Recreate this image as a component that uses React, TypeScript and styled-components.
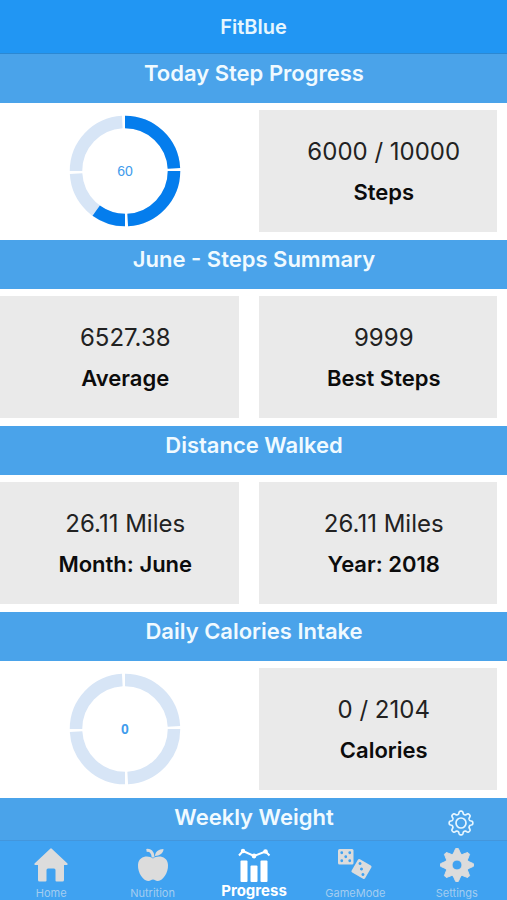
import React from "react";
import styled, { createGlobalStyle } from "styled-components";

const GlobalStyle = createGlobalStyle`
  * { box-sizing: border-box; }
  body {
    margin: 0;
    background: #ffffff;
    font-family: Inter, "Liberation Sans", sans-serif;
  }
`;

const Screen = styled.div`
  display: flex;
  flex-direction: column;
  height: 100vh;
`;

const TitleBar = styled.header`
  display: flex;
  align-items: center;
  justify-content: center;
  height: 54px;
  flex: none;
  background: #2196f3;
  border-bottom: 1px solid #2b88d3;
`;

const AppTitle = styled.h1`
  margin: 0;
  color: #e6f6fe;
  font-size: 20px;
  font-weight: 600;
  line-height: 28px;
`;

const Content = styled.main`
  flex: 1;
  min-height: 0;
  overflow-y: auto;
  scrollbar-width: none;
`;

const SectionBar = styled.div`
  display: grid;
  grid-template-columns: 60px 1fr 60px;
  align-items: start;
  height: 49px;
  padding-top: 5px;
  padding-left: 1px;
  background: #4aa3ea;
`;

const SectionTitle = styled.h2`
  grid-column: 2;
  margin: 0;
  color: #f0faff;
  font-size: 22px;
  font-weight: 600;
  line-height: 28px;
  text-align: center;
`;

const GearButton = styled.button`
  display: flex;
  justify-self: start;
  padding: 0;
  margin: 7px 0 0 1px;
  border: 0;
  background: none;
  color: #e6f6ff;
  cursor: pointer;
`;

const CardRow = styled.div`
  display: grid;
  grid-template-columns: 1fr 1fr;
  column-gap: 20px;
  padding: 7px 10px 8px 0;
`;

const Card = styled.div<{ $plain?: boolean }>`
  display: flex;
  flex-direction: column;
  align-items: center;
  justify-content: center;
  height: 122px;
  padding-top: ${(p) => (p.$plain ? "0" : "2px")};
  padding-left: 12px;
  background: ${(p) => (p.$plain ? "transparent" : "#eaeaea")};
`;

const Value = styled.div`
  color: #222222;
  font-size: 24px;
  line-height: 40px;
`;

const Caption = styled.div`
  color: #0c0c0c;
  font-size: 22px;
  font-weight: 600;
  line-height: 40px;
`;

const RingText = styled.text<{ $bold: boolean }>`
  fill: #3f9cec;
  font-family: "Liberation Sans", sans-serif;
  font-size: 14px;
  font-weight: ${(p) => (p.$bold ? 700 : 400)};
  text-anchor: middle;
`;

const TabBar = styled.nav`
  display: grid;
  grid-template-columns: repeat(5, 1fr);
  flex: none;
  height: 60px;
  background: #3fa2f1;
  border-top: 1px solid #4396dc;
`;

const Tab = styled.a<{ $active?: boolean }>`
  display: flex;
  flex-direction: column;
  align-items: center;
  padding-top: 6px;
  padding-left: 1px;
  gap: 1px;
  color: ${(p) => (p.$active ? "#ffffff" : "#dcdcdc")};
  text-decoration: none;
`;

const TabLabel = styled.span<{ $active?: boolean }>`
  color: ${(p) => (p.$active ? "#ffffff" : "#a3cdf0")};
  font-size: ${(p) => (p.$active ? "15px" : "11px")};
  font-weight: ${(p) => (p.$active ? 700 : 400)};
  line-height: ${(p) => (p.$active ? "14px" : "18px")};
`;

function Ring({ percent, text, label }: { percent: number; text: string; label: string }) {
  const start = [0, 25, 50, 75];
  const length = 24.1;
  const arc = (from: number, size: number, color: string) => (
    <circle
      key={`${color}${from}`}
      cx="56"
      cy="56"
      r="49"
      fill="none"
      stroke={color}
      strokeWidth="12.5"
      pathLength="100"
      strokeDasharray={`${size} ${100 - size}`}
      strokeDashoffset={-from}
      transform="rotate(-90 56 56)"
    />
  );
  return (
    <svg width="112" height="112" viewBox="0 0 112 112" role="img" aria-label={label}>
      {start.map((s) => arc(s, length, "#d7e5f6"))}
      {start
        .filter((s) => percent > s)
        .map((s) => arc(s, Math.min(length, percent - s), "#047ded"))}
      <RingText x="56" y="61" $bold={percent === 0}>{text}</RingText>
    </svg>
  );
}

const point = (c: number, r: number, a: number) =>
  `${(c + r * Math.cos(a)).toFixed(2)} ${(c + r * Math.sin(a)).toFixed(2)}`;

/* Eight straight-sided teeth. */
function gearPath(c: number, outer: number, inner: number, tip: number, root: number) {
  const pts: string[] = [];
  for (let i = 0; i < 8; i++) {
    const mid = (i * Math.PI) / 4 - Math.PI / 2;
    pts.push(
      point(c, inner, mid - root),
      point(c, outer, mid - tip),
      point(c, outer, mid + tip),
      point(c, inner, mid + root),
    );
  }
  return `M${pts.join("L")}Z`;
}

/* Eight rounded teeth, sampled along a flattened cosine. */
function softGearPath(c: number, radius: number, depth: number) {
  const pts: string[] = [];
  for (let i = 0; i < 160; i++) {
    const a = (i * Math.PI) / 80;
    pts.push(point(c, radius + depth * Math.tanh(1.8 * Math.cos(8 * a)), a));
  }
  return `M${pts.join("L")}Z`;
}

const OutlineGear = () => (
  <svg width="26" height="26" viewBox="0 0 26 26" fill="none" stroke="currentColor" strokeWidth="1.7" strokeLinejoin="round">
    <path d={softGearPath(13, 10.4, 1.5)} />
    <circle cx="13" cy="13" r="5" />
  </svg>
);

const HomeIcon = () => (
  <svg width="36" height="36" viewBox="0 0 36 36" fill="currentColor">
    <path d="M17.500 1.500Q18 1.200 18.500 1.500L34.500 16.500Q35 17.800 34 18H31V33Q31 34.500 29.500 34.500H23.500Q22.500 34.500 22.500 33.500V23Q22.500 21.500 21 21.500H15Q13.500 21.500 13.500 23V33.500Q13.500 34.500 12.500 34.500H6.500Q5 34.500 5 33V18H2Q1 17.800 1.500 16.500Z" />
  </svg>
);

const AppleIcon = () => (
  <svg width="36" height="36" viewBox="0 0 36 36" fill="currentColor">
    <path d="M18 11.500C14 8 3.500 8.500 3 18C2.700 26 8 33.500 13 34C15.500 34.200 16 32.500 18 32.500S20.500 34.200 23 34C28 33.500 33.300 26 33 18C32.500 8.500 22 8 18 11.500Z" />
    <path d="M20 9C20 5 23.500 2 28.500 2C28.500 6 24.500 9 20 9Z" />
    <path d="M11.500 3.500C15 2.800 18 5 18.200 10.500" fill="none" stroke="currentColor" strokeWidth="3" />
  </svg>
);

const ChartIcon = () => (
  <svg width="36" height="36" viewBox="0 0 36 36" fill="currentColor">
    <rect x="4.500" y="13.500" width="7" height="21.500" rx="1" />
    <rect x="14.500" y="18.500" width="7" height="16.500" rx="1" />
    <rect x="24.500" y="13.500" width="7" height="21.500" rx="1" />
    <path d="M3 8.500L7 4L18 9L29.500 4.500L33.500 8.500" fill="none" stroke="currentColor" strokeWidth="2" />
    <circle cx="7" cy="4" r="2.200" />
    <circle cx="18" cy="9" r="2.400" />
    <circle cx="29.500" cy="4.500" r="2.300" />
  </svg>
);

const DiceIcon = () => (
  <svg width="36" height="36" viewBox="0 0 36 36">
    <rect x="1" y="2" width="15.500" height="15.500" rx="1.500" fill="currentColor" />
    <g fill="#3fa2f1">
      <circle cx="4.750" cy="5.750" r="1.400" />
      <circle cx="12.750" cy="5.750" r="1.400" />
      <circle cx="8.750" cy="9.750" r="1.400" />
      <circle cx="4.750" cy="13.750" r="1.400" />
      <circle cx="12.750" cy="13.750" r="1.400" />
    </g>
    <g transform="rotate(30 24.500 22)">
      <rect x="16.750" y="14.250" width="15.500" height="15.500" rx="1.500" fill="currentColor" />
      <g fill="#3fa2f1">
        <circle cx="20.500" cy="18" r="1.500" />
        <circle cx="24.500" cy="22" r="1.500" />
        <circle cx="28.500" cy="26" r="1.500" />
      </g>
    </g>
  </svg>
);

const GearIcon = () => (
  <svg width="36" height="36" viewBox="0 0 36 36" fill="currentColor" stroke="currentColor" strokeLinejoin="round">
    <path
      fillRule="evenodd"
      d={`${gearPath(18, 16.5, 11.6, 0.08, 0.33)}M23 18A5 5 0 1 0 13 18A5 5 0 1 0 23 18Z`}
    />
  </svg>
);

type Stat = { value: string; caption: string };
type Section = { title: string; ring?: { percent: number; text: string }; stats: Stat[] };

const sections: Section[] = [
  {
    title: "Today Step Progress",
    ring: { percent: 60, text: "60" },
    stats: [{ value: "6000 / 10000", caption: "Steps" }],
  },
  {
    title: "June - Steps Summary",
    stats: [
      { value: "6527.38", caption: "Average" },
      { value: "9999", caption: "Best Steps" },
    ],
  },
  {
    title: "Distance Walked",
    stats: [
      { value: "26.11 Miles", caption: "Month: June" },
      { value: "26.11 Miles", caption: "Year: 2018" },
    ],
  },
  {
    title: "Daily Calories Intake",
    ring: { percent: 0, text: "0" },
    stats: [{ value: "0 / 2104", caption: "Calories" }],
  },
];

const tabs = [
  { label: "Home", Icon: HomeIcon },
  { label: "Nutrition", Icon: AppleIcon },
  { label: "Progress", Icon: ChartIcon, active: true },
  { label: "GameMode", Icon: DiceIcon },
  { label: "Settings", Icon: GearIcon },
];

export default function App() {
  return (
    <Screen>
      <GlobalStyle />
      <TitleBar>
        <AppTitle>FitBlue</AppTitle>
      </TitleBar>
      <Content>
        {sections.map((s) => (
          <section key={s.title}>
            <SectionBar>
              <SectionTitle>{s.title}</SectionTitle>
            </SectionBar>
            <CardRow>
              {s.ring && (
                <Card $plain>
                  <Ring {...s.ring} label={s.title} />
                </Card>
              )}
              {s.stats.map((stat) => (
                <Card key={stat.caption}>
                  <Value>{stat.value}</Value>
                  <Caption>{stat.caption}</Caption>
                </Card>
              ))}
            </CardRow>
          </section>
        ))}
        <SectionBar>
          <SectionTitle>Weekly Weight</SectionTitle>
          <GearButton type="button" aria-label="Weight settings">
            <OutlineGear />
          </GearButton>
        </SectionBar>
      </Content>
      <TabBar>
        {tabs.map(({ label, Icon, active }) => (
          <Tab key={label} href={`#${label.toLowerCase()}`} $active={active} aria-current={active ? "page" : undefined}>
            <Icon />
            <TabLabel $active={active}>{label}</TabLabel>
          </Tab>
        ))}
      </TabBar>
    </Screen>
  );
}
